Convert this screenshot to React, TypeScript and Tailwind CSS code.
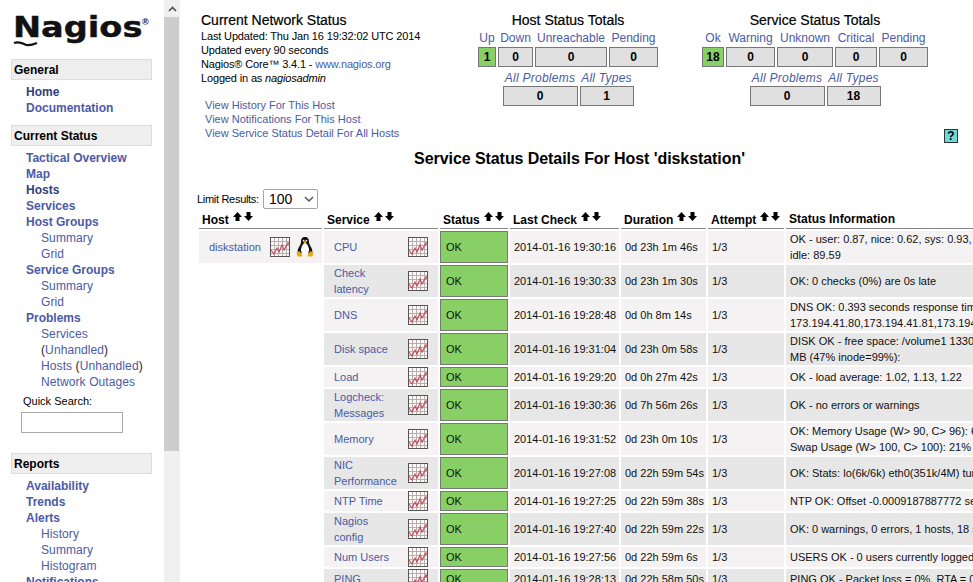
import React from 'react'

const LINK = 'text-[#4a5aa8]'

type NavItem = { label: React.ReactNode; level: 1 | 2; dark?: boolean }

const GENERAL: NavItem[] = [
  { label: 'Home', level: 1, dark: true },
  { label: 'Documentation', level: 1 },
]

const CURRENT: NavItem[] = [
  { label: 'Tactical Overview', level: 1 },
  { label: 'Map', level: 1 },
  { label: 'Hosts', level: 1, dark: true },
  { label: 'Services', level: 1 },
  { label: 'Host Groups', level: 1 },
  { label: 'Summary', level: 2 },
  { label: 'Grid', level: 2 },
  { label: 'Service Groups', level: 1 },
  { label: 'Summary', level: 2 },
  { label: 'Grid', level: 2 },
  { label: 'Problems', level: 1 },
  { label: 'Services', level: 2 },
  {
    label: (
      <>
        <span className="text-[#222]">(</span>Unhandled<span className="text-[#222]">)</span>
      </>
    ),
    level: 2,
  },
  {
    label: (
      <>
        Hosts <span className="text-[#222]">(</span>Unhandled<span className="text-[#222]">)</span>
      </>
    ),
    level: 2,
  },
  { label: 'Network Outages', level: 2 },
]

const REPORTS: NavItem[] = [
  { label: 'Availability', level: 1 },
  { label: 'Trends', level: 1 },
  { label: 'Alerts', level: 1 },
  { label: 'History', level: 2 },
  { label: 'Summary', level: 2 },
  { label: 'Histogram', level: 2 },
  { label: 'Notifications', level: 1 },
]

const SERVICES = [
  { name: 'CPU', check: '19:30:16', dur: '0d 23h 1m 46s', h: 'h-[32px]', info: ['OK - user: 0.87, nice: 0.62, sys: 0.93, iowait: 7.99,', 'idle: 89.59'] },
  { name: 'Check latency', check: '19:30:33', dur: '0d 23h 1m 30s', h: 'h-[32px]', info: ['OK: 0 checks (0%) are 0s late'] },
  { name: 'DNS', check: '19:28:48', dur: '0d 0h 8m 14s', h: 'h-[32px]', info: ['DNS OK: 0.393 seconds response time. www.google.com returns', '173.194.41.80,173.194.41.81,173.194.41.82'] },
  { name: 'Disk space', check: '19:31:04', dur: '0d 23h 0m 58s', h: 'h-[32px]', info: ['DISK OK - free space: /volume1 1330116 MB (53%);', 'MB (47% inode=99%):'] },
  { name: 'Load', check: '19:29:20', dur: '0d 0h 27m 42s', h: 'h-[20px]', info: ['OK - load average: 1.02, 1.13, 1.22'] },
  { name: 'Logcheck: Messages', check: '19:30:36', dur: '0d 7h 56m 26s', h: 'h-[32px]', info: ['OK - no errors or warnings'] },
  { name: 'Memory', check: '19:31:52', dur: '0d 23h 0m 10s', h: 'h-[32px]', info: ['OK: Memory Usage (W> 90, C> 96): 67%', 'Swap Usage (W> 100, C> 100): 21%'] },
  { name: 'NIC Performance', check: '19:27:08', dur: '0d 22h 59m 54s', h: 'h-[32px]', info: ['OK: Stats: lo(6k/6k) eth0(351k/4M) tun0(0k/0k)'] },
  { name: 'NTP Time', check: '19:27:25', dur: '0d 22h 59m 38s', h: 'h-[20px]', info: ['NTP OK: Offset -0.0009187887772 secs'] },
  { name: 'Nagios config', check: '19:27:40', dur: '0d 22h 59m 22s', h: 'h-[32px]', info: ['OK: 0 warnings, 0 errors, 1 hosts, 18 services'] },
  { name: 'Num Users', check: '19:27:56', dur: '0d 22h 59m 6s', h: 'h-[20px]', info: ['USERS OK - 0 users currently logged in'] },
  { name: 'PING', check: '19:28:13', dur: '0d 22h 58m 50s', h: 'h-[20px]', info: ['PING OK - Packet loss = 0%, RTA = 0.10 ms'] },
]

function NavList({ items }: { items: NavItem[] }) {
  return (
    <div className="mt-1">
      {items.map((item, i) => (
        <div
          key={i}
          className={`h-4 leading-4 whitespace-nowrap ${
            item.level === 1 ? 'pl-[15px] font-bold' : 'pl-[30px] tracking-[0.1px]'
          } ${item.dark ? 'text-[#2f3f78]' : LINK}`}
        >
          {item.label}
        </div>
      ))}
    </div>
  )
}

function NavHead({ children }: { children: React.ReactNode }) {
  return (
    <div className="h-[21px] w-[141px] border border-[#dddddd] bg-[#eeeeee] pl-[2px] font-bold leading-[21px] text-black">
      {children}
    </div>
  )
}

function Logo() {
  return (
    <div className="relative h-[48px] w-[140px]">
      <span className="absolute left-[2px] top-[-7px] origin-left scale-x-[1.2] font-['DejaVu_Sans'] text-[28px] font-bold leading-[48px] text-[#111] [-webkit-text-stroke:0.4px_#111]">
        Nagios
      </span>
      <span className="absolute left-[131px] top-[6px] text-[9px] font-bold leading-[10px] text-[#111]">®</span>
      <svg className="absolute left-[2px] top-[29px]" width="26" height="7" viewBox="0 0 26 7">
        <path d="M1 3c5-2 8 0 11 1.500s7 .5 12-1.500" fill="none" stroke="#111" strokeWidth="2.2" />
      </svg>
    </div>
  )
}

function Sidebar() {
  return (
    <div className="w-[164px] shrink-0 overflow-hidden pl-[11px] pt-[11px]">
      <Logo />
      <NavHead>General</NavHead>
      <NavList items={GENERAL} />
      <div className="h-[9px]" />
      <NavHead>Current Status</NavHead>
      <NavList items={CURRENT} />
      <div className="mt-[3px] h-4 pl-[12px] text-[11px] leading-4 text-black">Quick Search:</div>
      <input className="ml-[10px] mt-[3px] block h-[21px] w-[102px] border border-[#a9a9a9] bg-white" />
      <div className="h-5" />
      <NavHead>Reports</NavHead>
      <NavList items={REPORTS} />
    </div>
  )
}

function Scrollbar() {
  return (
    <div className="flex w-4 shrink-0 flex-col bg-[#f0f0f0]">
      <div className="flex h-[17px] items-center justify-center">
        <svg width="9" height="6" viewBox="0 0 9 6">
          <path d="M1 5l3.500-3.500L8 5" fill="none" stroke="#505050" strokeWidth="1.6" />
        </svg>
      </div>
      <div className="h-[434px] w-[15px] bg-[#cdcdcd]" />
    </div>
  )
}

function Totals({
  title,
  cells,
  bottom,
}: {
  title: string
  cells: { label: string; value: number; w: string; ok?: boolean }[]
  bottom: { label: string; value: number; w: string }[]
}) {
  return (
    <div className="flex flex-col items-center">
      <div className="text-[14px] leading-4 text-black [-webkit-text-stroke:0.2px_#000]">{title}</div>
      <div className="mt-[3px] flex gap-[2px]">
        {cells.map((c) => (
          <div key={c.label} className={`flex flex-col items-center ${c.w}`}>
            <div className={`h-[14px] whitespace-nowrap leading-[14px] ${LINK}`}>{c.label}</div>
            <div
              className={`mt-[2px] h-[20px] w-full border border-[#777777] text-center font-bold leading-[18px] text-black ${
                c.ok ? 'bg-[#88d066]' : 'bg-[#e0e0e0]'
              }`}
            >
              {c.value}
            </div>
          </div>
        ))}
      </div>
      <div className="mt-[4px] flex gap-[2px]">
        {bottom.map((c) => (
          <div key={c.label} className={`flex flex-col items-center ${c.w}`}>
            <div className={`h-[15px] whitespace-nowrap italic leading-[14px] tracking-[0.25px] ${LINK}`}>
              {c.label}
            </div>
            <div className="h-[20px] w-full border border-[#777777] bg-[#e0e0e0] text-center font-bold leading-[18px] text-black">
              {c.value}
            </div>
          </div>
        ))}
      </div>
    </div>
  )
}

function GraphIcon() {
  return (
    <svg width="20" height="20" viewBox="0 0 20 20" className="block shrink-0">
      <rect x="0.5" y="0.5" width="19" height="19" fill="#fdf8f8" stroke="#555" />
      <path
        d="M4.500 1v18M8.500 1v18M12.500 1v18M16.500 1v18M1 4.500h18M1 8.500h18M1 12.500h18M1 16.500h18"
        stroke="#b9aeae"
        strokeWidth="1"
        fill="none"
      />
      <path d="M1 13l3 4 3-6 2 4 3-7 2 5 4-7 2 3" stroke="#c4505c" strokeWidth="1.2" fill="none" />
    </svg>
  )
}

function Penguin() {
  return (
    <svg width="20" height="20" viewBox="0 0 20 20" className="block shrink-0">
      <path d="M10 0c-3 0-4 2-4 5 0 2-1 3-2 5-1 2-2 4-1 6h14c1-2 0-4-1-6-1-2-2-3-2-5 0-3-1-5-4-5z" fill="#111" />
      <path d="M10 6c-2 0-4 4-4 7 0 2 1 4 4 4s4-2 4-4c0-3-2-7-4-7z" fill="#fff" />
      <circle cx="8.600" cy="3.600" r="0.9" fill="#fff" />
      <circle cx="11.400" cy="3.600" r="0.9" fill="#fff" />
      <path d="M8 5l2-1 2 1-2 1.500z" fill="#eab308" />
      <path d="M1.500 16l3-2 3 4-1 1.500h-4zM18.500 16l-3-2-3 4 1 1.500h4z" fill="#e8a90c" />
    </svg>
  )
}

function SortArrows() {
  return (
    <span className="relative top-[-4px] ml-1 inline-flex gap-[2px] align-middle">
      <svg width="9" height="9" viewBox="0 0 9 9">
        <path d="M4.500 0L9 5H6.500v4h-4V5H0z" fill="#000" />
      </svg>
      <svg width="9" height="9" viewBox="0 0 9 9">
        <path d="M4.500 9L9 4H6.500V0h-4v4H0z" fill="#000" />
      </svg>
    </span>
  )
}

function Th({ label, sort = true }: { label: string; sort?: boolean }) {
  return (
    <th
      className={`h-[18px] whitespace-nowrap border-b border-[#888888] p-0 pl-[3px] text-left align-top font-bold leading-[16px] text-black ${
        sort ? 'pt-[1px]' : ''
      }`}
    >
      {label}
      {sort && <SortArrows />}
    </th>
  )
}

function ServiceTable() {
  return (
    <table className="w-[1091px] table-fixed border-separate border-spacing-[2px]">
      <colgroup>
        <col className="w-[123px]" />
        <col className="w-[114px]" />
        <col className="w-[68px]" />
        <col className="w-[109px]" />
        <col className="w-[85px]" />
        <col className="w-[76px]" />
        <col className="w-[500px]" />
      </colgroup>
      <thead>
        <tr>
          <Th label="Host" />
          <Th label="Service" />
          <Th label="Status" />
          <Th label="Last Check" />
          <Th label="Duration" />
          <Th label="Attempt" />
          <Th label="Status Information" sort={false} />
        </tr>
      </thead>
      <tbody className="text-[11px]">
        {SERVICES.map((s, i) => {
          const bg = i % 2 === 0 ? 'bg-[#f4f2f2]' : 'bg-[#e7e7e7]'
          return (
            <tr key={s.name}>
              {i === 0 ? (
                <td className={`p-0 ${bg}`}>
                  <div className="flex items-center pl-[10px]">
                    <span className={`w-[61px] ${LINK}`}>diskstation</span>
                    <GraphIcon />
                    <span className="w-[5px]" />
                    <Penguin />
                  </div>
                </td>
              ) : (
                <td className="p-0" />
              )}
              <td className={`p-0 ${bg} ${s.h}`}>
                <div className="flex items-center justify-between pl-[10px] pr-[10px]">
                  <span className={`w-[64px] leading-4 ${LINK}`}>{s.name}</span>
                  <GraphIcon />
                </div>
              </td>
              <td className="border border-[#777777] bg-[#88d066] p-0 pl-[5px] text-[#111]">OK</td>
              <td className={`whitespace-nowrap p-0 pl-[4px] text-[#111] ${bg}`}>2014-01-16 {s.check}</td>
              <td className={`whitespace-nowrap p-0 pl-[4px] text-[#111] ${bg}`}>{s.dur}</td>
              <td className={`p-0 pl-[4px] text-[#111] ${bg}`}>1/3</td>
              <td className={`whitespace-nowrap p-0 pl-[4px] leading-4 text-[#111] ${bg}`}>
                {s.info.map((line) => (
                  <div key={line}>{line}</div>
                ))}
              </td>
            </tr>
          )
        })}
      </tbody>
    </table>
  )
}

function Main() {
  return (
    <div className="min-w-0 flex-1 overflow-hidden">
      <div className="flex h-[129px] items-start pt-[12px]">
        <div className="ml-[21px] w-[277px] shrink-0 text-[11px] leading-[14px] tracking-[-0.15px] text-black">
          <div className="h-[17px] text-[14px] leading-4 tracking-normal [-webkit-text-stroke:0.2px_#000]">
            Current Network Status
          </div>
          <div>Last Updated: Thu Jan 16 19:32:02 UTC 2014</div>
          <div>Updated every 90 seconds</div>
          <div>
            Nagios® Core™ 3.4.1 - <span className={LINK}>www.nagios.org</span>
          </div>
          <div>
            Logged in as <i>nagiosadmin</i>
          </div>
          <div className={`ml-1 mt-[13px] tracking-normal ${LINK}`}>
            <div>View History For This Host</div>
            <div>View Notifications For This Host</div>
            <div>View Service Status Detail For All Hosts</div>
          </div>
        </div>
        <div className="w-[180px] shrink-0">
          <Totals
            title="Host Status Totals"
            cells={[
              { label: 'Up', value: 1, w: 'w-[18px]', ok: true },
              { label: 'Down', value: 0, w: 'w-[35px]' },
              { label: 'Unreachable', value: 0, w: 'w-[72px]' },
              { label: 'Pending', value: 0, w: 'w-[49px]' },
            ]}
            bottom={[
              { label: 'All Problems', value: 0, w: 'w-[75px]' },
              { label: 'All Types', value: 1, w: 'w-[54px]' },
            ]}
          />
        </div>
        <div className="ml-[44px] w-[226px] shrink-0">
          <Totals
            title="Service Status Totals"
            cells={[
              { label: 'Ok', value: 18, w: 'w-[22px]', ok: true },
              { label: 'Warning', value: 0, w: 'w-[49px]' },
              { label: 'Unknown', value: 0, w: 'w-[56px]' },
              { label: 'Critical', value: 0, w: 'w-[42px]' },
              { label: 'Pending', value: 0, w: 'w-[49px]' },
            ]}
            bottom={[
              { label: 'All Problems', value: 0, w: 'w-[75px]' },
              { label: 'All Types', value: 18, w: 'w-[54px]' },
            ]}
          />
        </div>
      </div>
      <div className="flex h-[14px] justify-end pr-[15px]">
        <div className="h-[14px] w-[14px] border border-[#333333] bg-[#6fd8d8] text-center text-[12px] font-bold leading-[12px] text-black">
          ?
        </div>
      </div>
      <div className="mt-[6px] h-5 pl-[6px] text-center text-[16px] font-bold leading-5 tracking-[-0.07px] text-black">
        Service Status Details For Host 'diskstation'
      </div>
      <div className="ml-[17px] mt-[20px] flex h-5 items-center">
        <span className="w-[66px] whitespace-nowrap text-[11px] tracking-[-0.3px] text-black">Limit Results:</span>
        <div className="flex h-5 w-[55px] items-center justify-between rounded-[2px] border border-[#a6a6a6] bg-white pl-[5px] pr-[3px] text-[14px]">
          100
          <svg width="10" height="6" viewBox="0 0 10 6">
            <path d="M1 1l4 4 4-4" fill="none" stroke="#555" strokeWidth="1.5" />
          </svg>
        </div>
      </div>
      <div className="ml-[17px]">
        <ServiceTable />
      </div>
    </div>
  )
}

export default function App() {
  return (
    <div className="flex h-[582px] w-[973px] overflow-hidden bg-white font-['Liberation_Sans',Arial,sans-serif] text-[12px] leading-4">
      <Sidebar />
      <Scrollbar />
      <Main />
    </div>
  )
}
